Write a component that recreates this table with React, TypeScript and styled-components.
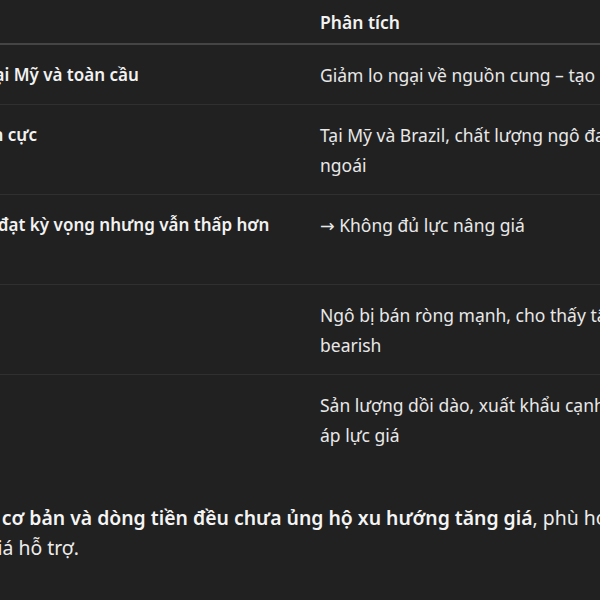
import styled, { createGlobalStyle } from 'styled-components';

const GlobalStyle = createGlobalStyle`
  html, body {
    margin: 0;
    padding: 0;
    background: #212121;
    overflow: hidden;
  }
  body {
    font-family: "Noto Sans", "Open Sans", "DejaVu Sans", sans-serif;
    color: #ececec;
  }
`;

type Row = { factor: string; analysis: string };

const rows: Row[] = [
  { factor: 'Cung tại Mỹ và toàn cầu', analysis: 'Giảm lo ngại về nguồn cung – tạo áp lực giảm giá' },
  { factor: 'Rất tích cực', analysis: 'Tại Mỹ và Brazil, chất lượng ngô đang tốt hơn năm ngoái' },
  { factor: 'Bán ra đạt kỳ vọng nhưng vẫn thấp hơn 2024', analysis: '→ Không đủ lực nâng giá' },
  { factor: 'COT', analysis: 'Ngô bị bán ròng mạnh, cho thấy tâm lý thị trường bearish' },
  { factor: 'Brazil', analysis: 'Sản lượng dồi dào, xuất khẩu cạnh tranh gay gắt gây áp lực giá' },
];

export default function App() {
  return (
    <>
      <GlobalStyle />
      <Sheet>
        <Table>
          <colgroup>
            <col style={{ width: 364 }} />
            <col />
          </colgroup>
          <thead>
            <tr>
              <HeadCell>Yếu tố</HeadCell>
              <HeadCell>Phân tích</HeadCell>
            </tr>
          </thead>
          <tbody>
            {rows.map((row) => (
              <BodyRow key={row.factor}>
                <FactorCell>{row.factor}</FactorCell>
                <Cell>{row.analysis}</Cell>
              </BodyRow>
            ))}
          </tbody>
        </Table>
        <Summary>
          Yếu tố <strong>cơ bản và dòng tiền đều chưa ủng hộ xu hướng tăng giá</strong>, phù hợp với kịch bản giảm về
          <br />
          mức giá hỗ trợ.
        </Summary>
      </Sheet>
    </>
  );
}

const Sheet = styled.div`
  width: 900px;
  margin-left: -60px;
`;

const Table = styled.table`
  width: 832px;
  table-layout: fixed;
  border-collapse: collapse;
  font-size: 17.5px;
  line-height: 30px;
`;

const HeadCell = styled.th`
  text-align: left;
  font-weight: 600;
  color: #f2f2f2;
  padding: 7px 16px 6px;
  border-bottom: 2px solid #454545;
  vertical-align: top;

  &:first-child {
    padding-left: 0;
  }
`;

const BodyRow = styled.tr`
  border-bottom: 1px solid #303030;

  &:last-child {
    border-bottom: none;
  }
`;

const Cell = styled.td`
  padding: 14.5px 16px;
  vertical-align: top;
  color: #e8e8e8;
`;

const FactorCell = styled(Cell)`
  padding-left: 0;
  font-size: 17px;
  font-weight: 600;
  color: #f2f2f2;
`;

const Summary = styled.p`
  margin: 39px 0 0;
  font-size: 19.4px;
  line-height: 30px;
  color: #ececec;

  strong {
    font-weight: 600;
    color: #f4f4f4;
  }
`;
